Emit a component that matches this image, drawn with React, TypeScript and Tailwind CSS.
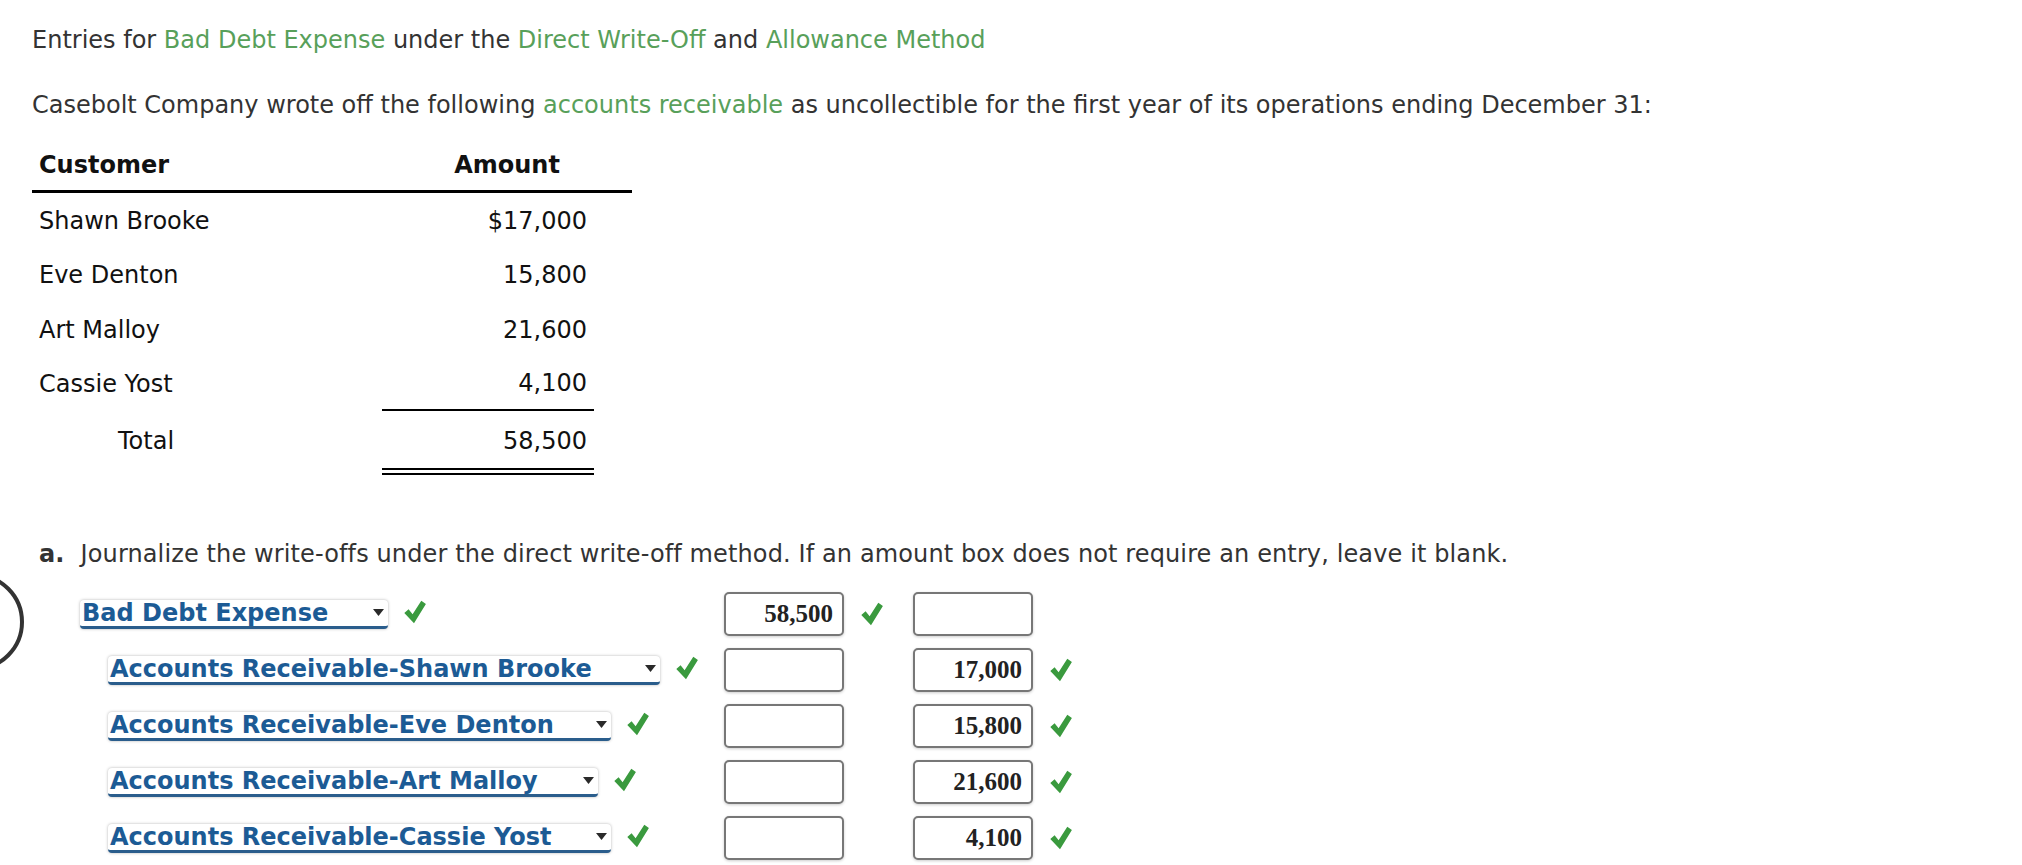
import React from 'react';

const customers = [
  { name: 'Shawn Brooke', amount: '$17,000', h: 'h-[55px]' },
  { name: 'Eve Denton', amount: '15,800', h: 'h-[54px]' },
  { name: 'Art Malloy', amount: '21,600', h: 'h-[55px]' },
  { name: 'Cassie Yost', amount: '4,100', h: 'h-[54px]' },
];

const entries = [
  { account: 'Bad Debt Expense', indent: false, width: 308, debit: '58,500', credit: '' },
  { account: 'Accounts Receivable-Shawn Brooke', indent: true, width: 552, debit: '', credit: '17,000' },
  { account: 'Accounts Receivable-Eve Denton', indent: true, width: 503, debit: '', credit: '15,800' },
  { account: 'Accounts Receivable-Art Malloy', indent: true, width: 490, debit: '', credit: '21,600' },
  { account: 'Accounts Receivable-Cassie Yost', indent: true, width: 503, debit: '', credit: '4,100' },
];

function Check() {
  return (
    <svg viewBox="0 0 22 24" className="h-[24px] w-[22px] shrink-0">
      <path d="M0.3 13 L4.6 9.3 L8.6 14.3 L17.3 0.8 L21.9 4 L10 23.2 Z" fill="#3a9a3e" />
    </svg>
  );
}

function AmountBox({ value }: { value: string }) {
  return (
    <div className="flex h-[44px] w-[120px] shrink-0 items-center justify-end rounded-[5px] border-2 border-[#777] bg-white pr-[9px] text-[25px] font-bold text-[#222] shadow-[0_1px_3px_rgba(0,0,0,0.2)] [font-family:'Liberation_Serif',serif]">
      {value}
    </div>
  );
}

function AccountSelect({ label, width }: { label: string; width: number }) {
  return (
    <div
      className="flex h-[29px] shrink-0 items-center justify-between rounded-[4px] border-b-[3px] border-[#2a5d8c] bg-white pl-[2px] pr-[4px] shadow-[0_0_3px_rgba(0,0,0,0.3)]"
      style={{ width }}
    >
      <span className="text-[24px] font-bold leading-none whitespace-nowrap text-[#1c5b95]">{label}</span>
      <svg viewBox="0 0 11 7" className="h-[7px] w-[11px]">
        <path d="M0 0 L11 0 L5.5 7 Z" fill="#2a2a2a" />
      </svg>
    </div>
  );
}

export default function App() {
  return (
    <div className="relative min-h-screen w-full bg-white pl-[32px] pt-[24px] text-[24px] leading-[32px] text-[#333] [font-family:'DejaVu_Sans','Verdana',sans-serif]">
      <svg className="absolute left-0 top-[570px] h-[110px] w-[30px]" viewBox="0 0 30 110">
        <circle cx="-25" cy="52" r="47" fill="none" stroke="#333" strokeWidth="4" />
      </svg>

      <p>
        Entries for <span className="text-[#58a05a]">Bad Debt Expense</span> under the{' '}
        <span className="text-[#58a05a]">Direct Write-Off</span> and{' '}
        <span className="text-[#58a05a]">Allowance Method</span>
      </p>

      <p className="mt-[33px]">
        Casebolt Company wrote off the following <span className="text-[#58a05a]">accounts receivable</span> as
        uncollectible for the first year of its operations ending December 31:
      </p>

      <div className="mt-[21px] w-[600px] text-[#111]">
        <div className="flex h-[51px] items-center border-b-[3px] border-black pb-[3px] font-bold">
          <div className="w-[350px] pl-[7px]">Customer</div>
          <div className="w-[250px] text-center">Amount</div>
        </div>
        {customers.map((c, i) => (
          <div key={c.name} className="flex">
            <div className={`flex w-[350px] items-center pl-[7px] ${c.h}`}>{c.name}</div>
            <div
              className={`flex w-[212px] items-center justify-end pr-[7px] ${c.h} ${
                i === 3 ? 'border-b-2 border-black' : ''
              }`}
            >
              {c.amount}
            </div>
          </div>
        ))}
        <div className="flex">
          <div className="flex h-[64px] w-[350px] items-center pb-[4px] pl-[86px]">Total</div>
          <div className="flex h-[64px] w-[212px] items-center justify-end border-b-[7px] border-double border-black pr-[7px] pt-[3px]">
            58,500
          </div>
        </div>
      </div>

      <p className="mt-[63px] pl-[7px] tracking-[0.12px]">
        <span className="font-bold">a.</span>
        <span className="ml-[16px]">
          Journalize the write-offs under the direct write-off method. If an amount box does not require an entry,
          leave it blank.
        </span>
      </p>

      <div className="mt-[22px] flex flex-col gap-[12px] pl-[48px]">
        {entries.map((e) => (
          <div key={e.account} className="flex h-[44px] items-center">
            <div className={`flex w-[644px] shrink-0 items-center ${e.indent ? 'pl-[28px]' : ''}`}>
              <AccountSelect label={e.account} width={e.width} />
              <div className="ml-[16px] mt-[-4px]">
                <Check />
              </div>
            </div>
            <AmountBox value={e.debit} />
            <div className="flex w-[69px] shrink-0 items-center pl-[17px]">{e.debit && <Check />}</div>
            <AmountBox value={e.credit} />
            <div className="ml-[17px]">{e.credit && <Check />}</div>
          </div>
        ))}
      </div>
    </div>
  );
}
